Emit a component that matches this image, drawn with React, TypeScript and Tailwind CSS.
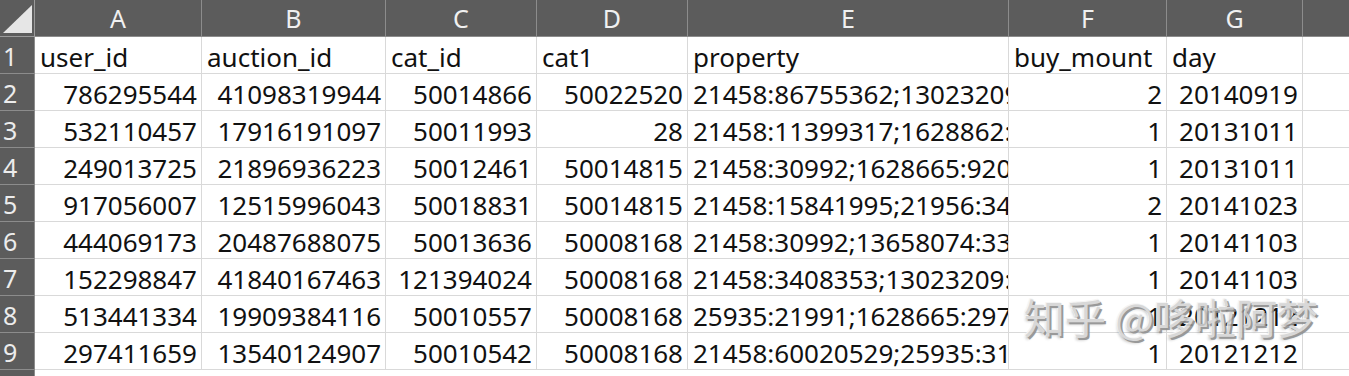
const cols = [
  { key: "A", w: "w-[167px]" },
  { key: "B", w: "w-[184px]" },
  { key: "C", w: "w-[151px]" },
  { key: "D", w: "w-[151px]" },
  { key: "E", w: "w-[321px]" },
  { key: "F", w: "w-[158px]" },
  { key: "G", w: "w-[136px]" },
];

const header = ["user_id", "auction_id", "cat_id", "cat1", "property", "buy_mount", "day"];

const data: string[][] = [
  ["786295544", "41098319944", "50014866", "50022520", "21458:86755362;13023209:3593274", "2", "20140919"],
  ["532110457", "17916191097", "50011993", "28", "21458:11399317;1628862:3251296", "1", "20131011"],
  ["249013725", "21896936223", "50012461", "50014815", "21458:30992;1628665:92012;122", "1", "20131011"],
  ["917056007", "12515996043", "50018831", "50014815", "21458:15841995;21956:3494076", "2", "20141023"],
  ["444069173", "20487688075", "50013636", "50008168", "21458:30992;13658074:3323064", "1", "20141103"],
  ["152298847", "41840167463", "121394024", "50008168", "21458:3408353;13023209:727117", "1", "20141103"],
  ["513441334", "19909384116", "50010557", "50008168", "25935:21991;1628665:29784;225", "1", "20121212"],
  ["297411659", "13540124907", "50010542", "50008168", "21458:60020529;25935:31381", "1", "20121212"],
];

const font = { fontFamily: '"Noto Sans", "Noto Sans CJK SC", sans-serif' };

function RowHead({ n }: { n: string }) {
  return (
    <div className="w-[35px] h-[37px] shrink-0 bg-[#5c5c5c] border-b border-r border-[#8c8c8c] text-[#ececec] text-[25px] leading-[36px] pt-[1px] pl-[3px] overflow-hidden">
      {n}
    </div>
  );
}

function DataCell({ w, v, right }: { w: string; v: string; right: boolean }) {
  return (
    <div
      className={`${w} h-[37px] shrink-0 border-b border-r border-[#d9d9d9] text-[26px] leading-[36px] pt-[2px] overflow-hidden whitespace-nowrap text-[#111] ${
        right ? "text-right pr-[4px]" : "text-left pl-[5px]"
      }`}
    >
      {v}
    </div>
  );
}

export default function App() {
  return (
    <div className="w-[1349px] h-[376px] overflow-hidden bg-white relative" style={font}>
      <div className="flex h-[37px] bg-[#5c5c5c]">
        <div className="w-[35px] h-[37px] shrink-0 border-r border-b border-[#9a9a9a] flex items-start">
          <svg width={34} height={36} viewBox="0 0 34 36">
            <polygon points="3,33 32,5 32,33" fill="#e6e6e6" />
          </svg>
        </div>
        {cols.map((c) => (
          <div
            key={c.key}
            className={`${c.w} h-[37px] shrink-0 border-r border-b border-[#8c8c8c] text-center text-[#f0f0f0] text-[25px] leading-[36px]`}
          >
            {c.key}
          </div>
        ))}
        <div className="flex-1 h-[37px] border-b border-[#8c8c8c]" />
      </div>

      <div className="flex">
        <RowHead n="1" />
        {header.map((h, i) => (
          <DataCell key={i} w={cols[i].w} v={h} right={false} />
        ))}
        <div className="flex-1 h-[37px] border-b border-[#d9d9d9]" />
      </div>

      {data.map((row, r) => (
        <div key={r} className="flex">
          <RowHead n={String(r + 2)} />
          {row.map((v, i) => (
            <DataCell key={i} w={cols[i].w} v={v} right={i !== 4} />
          ))}
          <div className="flex-1 h-[37px] border-b border-[#d9d9d9]" />
        </div>
      ))}

      <div className="flex">
        <RowHead n="10" />
      </div>

      <div
        className="absolute left-[1024px] top-[296px] text-[41px] leading-none text-[#d4d4d4] whitespace-nowrap"
        style={{
          fontFamily: '"Noto Sans CJK SC", sans-serif',
          textShadow: "2px 2px 0 #8f8f8f, -1px -1px 0 #f4f4f4, 0 2px 3px rgba(0,0,0,0.3)",
          opacity: 0.9,
        }}
      >
        知乎 @哆啦阿梦
      </div>
    </div>
  );
}
